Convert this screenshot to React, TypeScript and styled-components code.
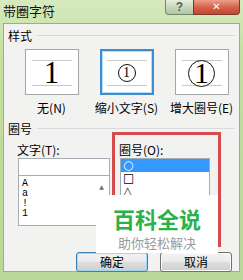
import React from 'react';
import styled, {createGlobalStyle} from 'styled-components';

const GlobalStyle = createGlobalStyle`
    html, body {
        margin: 0;
        padding: 0;
        background: #bcd99a;
    }
    body {
        font-family: "Noto Sans CJK SC", "Liberation Sans", sans-serif;
    }
`

const CJK = `"Noto Sans CJK SC", "Liberation Sans", sans-serif`;

export default function App() {
    return (
        <>
            <GlobalStyle/>
            <Window>
                <TitleBar>
                    <Title>带圈字符</Title>
                    <Controls>
                        <HelpButton>?</HelpButton>
                        <CloseButton>✕</CloseButton>
                    </Controls>
                </TitleBar>
                <Panel>
                    <GroupHeader>
                        <GroupLabel>样式</GroupLabel>
                        <GroupLine/>
                    </GroupHeader>
                    <StylesRow>
                        <StyleOption>
                            <StyleBox>
                                <Guide>
                                    <PlainOne>1</PlainOne>
                                </Guide>
                            </StyleBox>
                            <OptionLabel>无(N)</OptionLabel>
                        </StyleOption>
                        <StyleOption>
                            <StyleBox $selected>
                                <Guide>
                                    <Circled $size={18} $font={14}>1</Circled>
                                </Guide>
                            </StyleBox>
                            <OptionLabel>缩小文字(S)</OptionLabel>
                        </StyleOption>
                        <StyleOption>
                            <StyleBox>
                                <Guide>
                                    <Circled $size={27} $font={30}>1</Circled>
                                </Guide>
                            </StyleBox>
                            <OptionLabel>增大圈号(E)</OptionLabel>
                        </StyleOption>
                    </StylesRow>

                    <GroupHeader $top={7}>
                        <GroupLabel>圈号</GroupLabel>
                        <GroupLine/>
                    </GroupHeader>
                    <SymbolArea>
                        <TextColumn>
                            <FieldLabel>文字(T):</FieldLabel>
                            <TextInput/>
                            <TextList>
                                <ListItems>
                                    <MonoItem>A</MonoItem>
                                    <MonoItem>a</MonoItem>
                                    <MonoItem>!</MonoItem>
                                    <MonoItem>1</MonoItem>
                                </ListItems>
                                <ScrollBar>
                                    <ScrollArrow>▲</ScrollArrow>
                                </ScrollBar>
                            </TextList>
                        </TextColumn>
                        <Highlight>
                            <FieldLabel>圈号(O):</FieldLabel>
                            <ShapeList>
                                <ShapeItem $selected>○</ShapeItem>
                                <ShapeItem>□</ShapeItem>
                                <ShapeItem>△</ShapeItem>
                            </ShapeList>
                        </Highlight>
                    </SymbolArea>

                    <ButtonRow>
                        <DialogButton $primary>确定</DialogButton>
                        <DialogButton>取消</DialogButton>
                    </ButtonRow>
                </Panel>

                <Watermark>
                    <BrandName>百科全说</BrandName>
                    <BrandSlogan>助你轻松解决</BrandSlogan>
                </Watermark>
            </Window>
        </>
    );
}

const Window = styled.div`
    position: relative;
    width: 243px;
    height: 280px;
    overflow: hidden;
    background: linear-gradient(180deg, #d6eabf 0%, #c4df9f 20%, #b9d797 100%);
    display: flex;
    flex-direction: column;
`
const TitleBar = styled.div`
    height: 23px;
    display: flex;
    justify-content: space-between;
    align-items: flex-start;
    flex-shrink: 0;
`
const Title = styled.div`
    font-family: ${CJK};
    font-size: 13px;
    line-height: 14px;
    color: #111;
    padding: 4px 0 0 3px;
`
const Controls = styled.div`
    display: flex;
    margin-right: 3px;
`
const HelpButton = styled.div`
    width: 28px;
    height: 15px;
    box-sizing: border-box;
    border: 1px solid #71886a;
    border-top: none;
    border-right: none;
    border-radius: 0 0 0 4px;
    background: linear-gradient(180deg, #e6eedd 0%, #c9d7bc 50%, #b3c5a3 100%);
    color: #56624f;
    font-family: "Liberation Sans", sans-serif;
    font-size: 12px;
    font-weight: bold;
    line-height: 14px;
    text-align: center;
`
const CloseButton = styled.div`
    width: 47px;
    height: 15px;
    box-sizing: border-box;
    border: 1px solid #7f3a2c;
    border-top: none;
    border-radius: 0 0 4px 0;
    background: linear-gradient(180deg, #eba08d 0%, #d6644c 50%, #c4462f 100%);
    color: #fff;
    font-family: "DejaVu Sans", sans-serif;
    font-size: 10px;
    font-weight: bold;
    line-height: 14px;
    text-align: center;
`
const Panel = styled.div`
    margin: 0 3px;
    height: 249px;
    box-sizing: border-box;
    border: 1px solid #98b18a;
    background: #f2f3f0;
    display: flex;
    flex-direction: column;
`
const GroupHeader = styled.div<{ $top?: number }>`
    display: flex;
    align-items: center;
    margin: ${p => p.$top ?? 5}px 4px 0 4px;
    height: 13px;
`
const GroupLabel = styled.span`
    font-family: ${CJK};
    font-size: 12px;
    line-height: 13px;
    color: #000;
`
const GroupLine = styled.div`
    flex: 1;
    height: 1px;
    margin-left: 5px;
    background: #d5dadf;
`
const StylesRow = styled.div`
    display: grid;
    grid-template-columns: repeat(3, 75px);
    margin: 7px 0 0 10px;
`
const StyleOption = styled.div`
    display: flex;
    flex-direction: column;
    align-items: center;
`
const StyleBox = styled.div<{ $selected?: boolean }>`
    width: 54px;
    height: 46px;
    box-sizing: border-box;
    background: #fff;
    border: ${p => p.$selected ? '2px solid #3f8dcf' : '1px solid #a7a7a7'};
    box-shadow: ${p => p.$selected ? 'inset 0 0 0 1px #b5dbf5' : 'none'};
    display: flex;
    justify-content: center;
    padding-top: ${p => p.$selected ? 9 : 10}px;
`
const Guide = styled.div`
    width: 40px;
    height: 24px;
    border-top: 1px solid #c9c9c9;
    border-bottom: 1px solid #c9c9c9;
    display: flex;
    align-items: center;
    justify-content: center;
`
const PlainOne = styled.span`
    font-family: "Liberation Serif", serif;
    font-size: 31px;
    line-height: 24px;
    color: #000;
`
const Circled = styled.span<{ $size: number; $font: number }>`
    width: ${p => p.$size}px;
    height: ${p => p.$size}px;
    box-sizing: border-box;
    border: 1.5px solid #111;
    border-radius: 50%;
    display: flex;
    align-items: center;
    justify-content: center;
    font-family: "Liberation Serif", serif;
    font-size: ${p => p.$font}px;
    line-height: 1;
    color: #000;
    background: #fff;
`
const OptionLabel = styled.div`
    margin-top: 6px;
    font-family: ${CJK};
    font-size: 12px;
    line-height: 14px;
    color: #000;
    white-space: nowrap;
`
const SymbolArea = styled.div`
    display: flex;
    align-items: flex-start;
    margin-left: 13px;
`
const TextColumn = styled.div`
    display: flex;
    flex-direction: column;
    padding-top: 9px;
    width: 93px;
`
const FieldLabel = styled.div`
    font-family: ${CJK};
    font-size: 12px;
    line-height: 12px;
    color: #000;
    white-space: nowrap;
`
const TextInput = styled.div`
    margin: 2px 0 0 1px;
    height: 18px;
    box-sizing: border-box;
    border: 1px solid #a5acb5;
    background: #fff;
`
const TextList = styled.div`
    margin-left: 1px;
    height: 50px;
    box-sizing: border-box;
    border: 1px solid #a5acb5;
    border-top: none;
    background: #fff;
    display: flex;
`
const ListItems = styled.div`
    flex: 1;
    padding: 3px 0 0 3px;
`
const MonoItem = styled.div`
    font-family: "Liberation Mono", monospace;
    font-size: 10px;
    line-height: 10px;
    height: 10px;
    color: #000;
`
const ScrollBar = styled.div`
    width: 15px;
    display: flex;
    justify-content: center;
`
const ScrollArrow = styled.span`
    margin-top: 8px;
    font-family: "DejaVu Sans", sans-serif;
    font-size: 6px;
    line-height: 6px;
    color: #6d6d6d;
`
const Highlight = styled.div`
    margin: -3px 0 0 2px;
    width: 109px;
    height: 115px;
    box-sizing: border-box;
    border: 3px solid #d54c4c;
    padding: 9px 0 0 4px;
    display: flex;
    flex-direction: column;
`
const ShapeList = styled.div`
    margin: 2px 0 0 1px;
    width: 90px;
    height: 80px;
    box-sizing: border-box;
    border: 1px solid #a5acb5;
    background: #fff;
`
const ShapeItem = styled.div<{ $selected?: boolean }>`
    height: 13px;
    padding-left: 2px;
    font-family: "DejaVu Sans", sans-serif;
    font-size: 12px;
    line-height: 13px;
    color: ${p => p.$selected ? '#fff' : '#000'};
    background: ${p => p.$selected ? '#3399ff' : 'transparent'};
`
const ButtonRow = styled.div`
    display: flex;
    justify-content: flex-end;
    gap: 12px;
    margin: 5px 7px 0 0;
`
const DialogButton = styled.div<{ $primary?: boolean }>`
    width: 72px;
    height: 20px;
    box-sizing: border-box;
    border: 1px solid ${p => p.$primary ? '#3c7fb1' : '#707070'};
    border-radius: 3px;
    box-shadow: inset 0 0 0 1px ${p => p.$primary ? '#9fd8f5' : '#fbfbfb'};
    background: linear-gradient(180deg, #f2f2f2 0%, #ebebeb 48%, #dddddd 52%, #cfcfcf 100%);
    font-family: ${CJK};
    font-size: 12px;
    line-height: 18px;
    text-align: center;
    color: #000;
`
const Watermark = styled.div`
    position: absolute;
    left: 96px;
    top: 195px;
    width: 122px;
    height: 58px;
    background: #fff;
    display: flex;
    flex-direction: column;
    align-items: center;
    padding-top: 8px;
    box-sizing: border-box;
`
const BrandName = styled.div`
    font-family: ${CJK};
    font-size: 22px;
    font-weight: bold;
    line-height: 30px;
    height: 30px;
    color: #27b24a;
`
const BrandSlogan = styled.div`
    font-family: ${CJK};
    font-size: 13px;
    line-height: 19px;
    color: #9a9a9a;
`
